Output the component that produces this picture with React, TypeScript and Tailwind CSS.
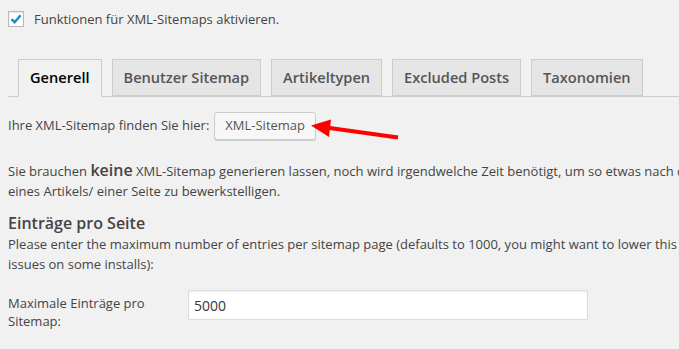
import React from "react";

export default function App() {
  const tabs = ["Generell", "Benutzer Sitemap", "Artikeltypen", "Excluded Posts", "Taxonomien"];
  return (
    <div
      className="relative w-[679px] h-[349px] overflow-hidden bg-[#f1f1f1] text-[#444] text-[13px]"
      style={{ fontFamily: '"Open Sans", "Noto Sans", sans-serif' }}
    >
      {/* checkbox row */}
      <div className="flex items-center pl-2 pt-[11px] h-[27px]">
        <span className="w-4 h-4 border border-[#b4b9be] bg-white shadow-[inset_0_1px_2px_rgba(0,0,0,0.1)] flex items-center justify-center">
          <svg width="14" height="14" viewBox="0 0 14 14">
            <path d="M2.5 7.2 L5.6 10.2 L11.6 3.2" fill="none" stroke="#1e8cbe" strokeWidth="2.4" />
          </svg>
        </span>
        <span className="ml-[10px] leading-[16px]">Funktionen für XML-Sitemaps aktivieren.</span>
      </div>

      {/* tabs */}
      <div className="ml-2 mt-[32px] flex border-b border-[#ccc] h-[38px] w-[700px]">
        {tabs.map((t, i) => (
          <div
            key={t}
            className={
              i === 0
                ? "ml-[10px] h-[38px] border border-[#ccc] border-b-[#f1f1f1] bg-[#f1f1f1] text-black px-[11px] text-[14.6px] font-semibold leading-[35px]"
                : "ml-[10px] h-[37px] border border-[#ccc] bg-[#e5e5e5] text-[#555] px-[11px] text-[14.6px] font-semibold leading-[35px]"
            }
          >
            {t}
          </div>
        ))}
      </div>

      {/* sitemap link row */}
      <div className="flex items-center pl-2 mt-[15px] h-[28px]">
        <span>Ihre XML-Sitemap finden Sie hier:</span>
        <span className="ml-[5px] h-[28px] px-[10px] border border-[#ccc] rounded-[3px] bg-[#f7f7f7] shadow-[0_1px_0_#ccc] flex items-center text-[#555]">
          XML-Sitemap
        </span>
      </div>

      {/* paragraph */}
      <div className="pl-2 mt-[20px] leading-[20px] whitespace-nowrap">
        <div>
          Sie brauchen <b className="text-[16px] font-semibold">keine</b> XML-Sitemap generieren lassen, noch wird irgendwelche Zeit benötigt, um so etwas nach dem Veröffentlichen
        </div>
        <div>eines Artikels/ einer Seite zu bewerkstelligen.</div>
      </div>

      {/* section */}
      <div className="pl-2 mt-[12px] whitespace-nowrap">
        <div className="text-[16px] font-semibold leading-[21px]">Einträge pro Seite</div>
        <div className="leading-[20px]">
          Please enter the maximum number of entries per sitemap page (defaults to 1000, you might want to lower this to prevent
        </div>
        <div className="leading-[20px]">issues on some installs):</div>
      </div>

      {/* form row */}
      <div className="flex pl-2 mt-[16px]">
        <div className="w-[180px] leading-[18px] pt-[4px]">
          Maximale Einträge pro
          <br />
          Sitemap:
        </div>
        <div className="w-[400px] h-[30px] border border-[#ddd] bg-white shadow-[inset_0_1px_2px_rgba(0,0,0,0.07)] px-[5px] flex items-center text-[14px] text-[#32373c]">
          5000
        </div>
      </div>

      {/* red arrow annotation */}
      <svg className="absolute left-0 top-0 pointer-events-none" width="679" height="349">
        <line x1="326" y1="127.5" x2="398" y2="137.5" stroke="#f00" strokeWidth="4" />
        <polygon points="311,125.5 331,119.5 329,137" fill="#f00" />
      </svg>
    </div>
  );
}
